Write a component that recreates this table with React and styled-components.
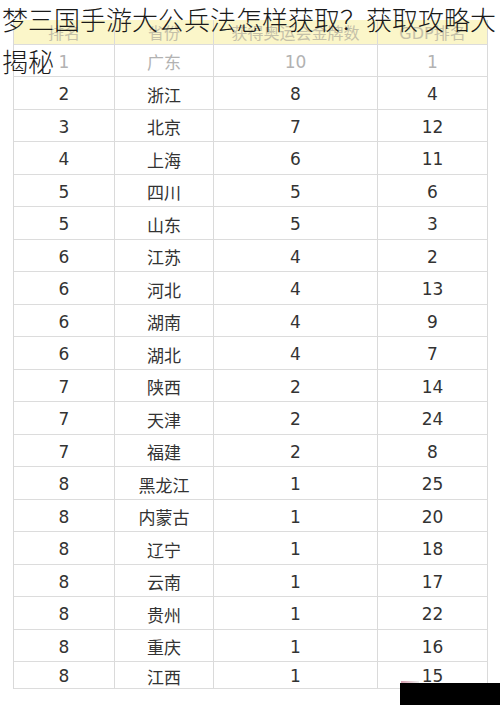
import React from "react";
import styled, { createGlobalStyle } from "styled-components";

const Global = createGlobalStyle`
  html, body { margin: 0; padding: 0; background: #ffffff; }
  body { width: 500px; height: 705px; overflow: hidden; }
`;

const Page = styled.div`
  position: relative;
  width: 500px;
  height: 705px;
  overflow: hidden;
  background: #fff;
  padding-top: 20px;
  box-sizing: border-box;
`;

const Title = styled.h1`
  position: absolute;
  top: -2px;
  left: 2px;
  right: 0;
  margin: 0;
  font-family: "Noto Sans CJK SC", sans-serif;
  font-weight: 300;
  font-size: 26px;
  line-height: 42px;
  color: #1a1a1a;
  z-index: 2;
`;

const Table = styled.div`
  margin-left: 13px;
  width: 475px;
  display: grid;
  grid-template-columns: 101px 99px 164px 110px;
  border-left: 1px solid #d9d9d9;
  box-sizing: border-box;
  font-family: "DejaVu Sans", "Noto Sans CJK SC", sans-serif;
`;

const Cell = styled.div`
  height: ${(p) => p.$h}px;
  box-sizing: border-box;
  border-right: 1px solid #dadada;
  border-bottom: 1px solid #dcdcdc;
  display: flex;
  align-items: center;
  justify-content: center;
  padding-top: ${(p) => (p.$head ? 0 : 2)}px;
  font-size: ${(p) => (p.$head ? 16 : 17)}px;
  color: ${(p) => (p.$head ? "#c4c0a8" : p.$faded ? "#b2b2b2" : "#333333")};
  background: ${(p) => (p.$head ? "#fbf6c9" : "#ffffff")};
  white-space: nowrap;
  overflow: hidden;
`;

const Cover = styled.div`
  position: absolute;
  left: 400px;
  top: 683px;
  width: 100px;
  height: 22px;
  background: #000;
  z-index: 3;
`;

const Mark = styled.div`
  position: absolute;
  left: 401px;
  top: 681px;
  width: 18px;
  height: 4px;
  background: linear-gradient(90deg, #d7a0b0, #eee);
  z-index: 3;
`;

const header = ["排名", "省份", "获得奥运会金牌数", "GDP排名"];

const rows = [
  ["1", "广东", "10", "1"],
  ["2", "浙江", "8", "4"],
  ["3", "北京", "7", "12"],
  ["4", "上海", "6", "11"],
  ["5", "四川", "5", "6"],
  ["5", "山东", "5", "3"],
  ["6", "江苏", "4", "2"],
  ["6", "河北", "4", "13"],
  ["6", "湖南", "4", "9"],
  ["6", "湖北", "4", "7"],
  ["7", "陕西", "2", "14"],
  ["7", "天津", "2", "24"],
  ["7", "福建", "2", "8"],
  ["8", "黑龙江", "1", "25"],
  ["8", "内蒙古", "1", "20"],
  ["8", "辽宁", "1", "18"],
  ["8", "云南", "1", "17"],
  ["8", "贵州", "1", "22"],
  ["8", "重庆", "1", "16"],
  ["8", "江西", "1", "15"],
];

function rowHeight(i) {
  if (i === 0) return 32;
  if (i === rows.length - 1) return 27;
  return i % 2 === 1 ? 33 : 32;
}

export default function App() {
  return (
    <Page>
      <Global />
      <Title>梦三国手游大公兵法怎样获取？获取攻略大揭秘</Title>
      <Table>
        {header.map((h, j) => (
          <Cell key={"h" + j} $head $h={25}>
            {h}
          </Cell>
        ))}
        {rows.map((r, i) =>
          r.map((c, j) => (
            <Cell key={i + "-" + j} $h={rowHeight(i)} $faded={i === 0}>
              {c}
            </Cell>
          ))
        )}
      </Table>
      <Mark />
      <Cover />
    </Page>
  );
}
